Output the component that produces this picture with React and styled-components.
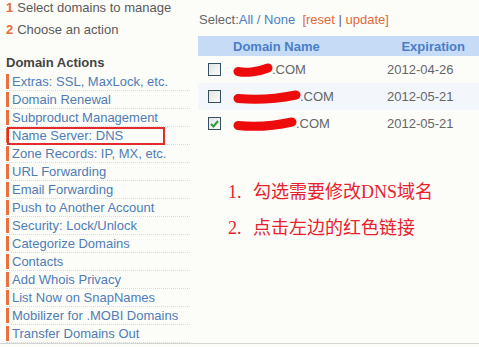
import React from "react";
import styled, { createGlobalStyle } from "styled-components";

const Global = createGlobalStyle`
  html, body { margin: 0; padding: 0; background: #fcfcf9; }
  body { font-family: "Liberation Sans", Arial, sans-serif; font-size: 13px; color: #555; }
`;

const Page = styled.div`
  display: flex;
  width: 479px;
  box-sizing: border-box;
  border-bottom: 1px solid #d4d4d4;
  height: 344px;
  overflow: hidden;
`;

const Side = styled.div`
  width: 195px;
  flex: none;
  display: flex;
  flex-direction: column;
`;

const Step = styled.div`
  line-height: 15px;
  padding-left: 6px;
  margin-top: ${(p) => p.$gap || 0}px;
  color: #5a5a5a;
  white-space: nowrap;
`;

const StepNum = styled.span`
  color: #e46a36;
  font-weight: bold;
  margin-right: 4px;
`;

const SideTitle = styled.div`
  margin-top: 18px;
  margin-bottom: 2px;
  padding-left: 6px;
  line-height: 16px;
  font-weight: bold;
  color: #444;
`;

const ActionList = styled.ul`
  list-style: none;
  margin: 0;
  padding: 0 5px 0 6px;
`;

const Action = styled.li`
  position: relative;
  display: flex;
  align-items: center;
  height: 17px;
  border-bottom: 1px dotted #d3dbe6;
  color: #4f7cb6;
  white-space: nowrap;
  &::before {
    content: "";
    width: 3px;
    height: 15px;
    background: #ea7040;
    margin-right: 3px;
    flex: none;
  }
`;

const Highlight = styled.span`
  position: absolute;
  left: 1px;
  top: 0px;
  width: 154px;
  height: 14px;
  border: 2px solid #e42a2a;
`;

const Main = styled.div`
  flex: 1;
  display: flex;
  flex-direction: column;
`;

const SelectBar = styled.div`
  margin-top: 12px;
  padding-left: 4px;
  line-height: 16px;
  color: #666;
  white-space: nowrap;
`;

const Blue = styled.span`
  color: #4a7ec4;
`;

const Orange = styled.span`
  color: #e06a3a;
`;

const Table = styled.div`
  margin-top: 8px;
  margin-left: 3px;
`;

const Row = styled.div`
  display: grid;
  grid-template-columns: 35px 1fr 92px;
  align-items: center;
  height: ${(p) => (p.$head ? 20 : 27)}px;
  background: ${(p) => (p.$head ? "#c6dcf6" : p.$alt ? "#f3f7fc" : "transparent")};
  font-weight: ${(p) => (p.$head ? "bold" : "normal")};
  color: ${(p) => (p.$head ? "#4a7ec6" : "#666")};
`;

const RightCell = styled.div`
  text-align: ${(p) => (p.$right ? "right" : "left")};
  padding-right: ${(p) => (p.$right ? 14 : 0)}px;
  white-space: nowrap;
`;

const Box = styled.span`
  display: flex;
  align-items: center;
  justify-content: center;
  width: 11px;
  height: 11px;
  margin-left: 10px;
  border: 1px solid #33505e;
  background: linear-gradient(135deg, #e4e4e4, #fafafa);
`;

const NameCell = styled.div`
  display: flex;
  align-items: center;
`;

const Scribble = styled.svg`
  flex: none;
  margin-right: -1px;
`;

const Notes = styled.div`
  margin-top: 37px;
  padding-left: 33px;
  color: #e8222c;
  font-family: "Liberation Serif", "Noto Sans CJK SC", serif;
  font-size: 18px;
  line-height: 36px;
`;

const NoteNum = styled.span`
  display: inline-block;
  width: 25px;
`;

const actions = [
  "Extras: SSL, MaxLock, etc.",
  "Domain Renewal",
  "Subproduct Management",
  "Name Server: DNS",
  "Zone Records: IP, MX, etc.",
  "URL Forwarding",
  "Email Forwarding",
  "Push to Another Account",
  "Security: Lock/Unlock",
  "Categorize Domains",
  "Contacts",
  "Add Whois Privacy",
  "List Now on SnapNames",
  "Mobilizer for .MOBI Domains",
  "Transfer Domains Out",
];

const domains = [
  { w: 40, date: "2012-04-26" },
  { w: 68, date: "2012-05-21", alt: true },
  { w: 64, date: "2012-05-21", checked: true },
];

function Blot({ w }) {
  return (
    <Scribble width={w} height="14" viewBox={`0 0 ${w} 14`}>
      <path
        d={`M5 8.5 C ${w * 0.3} 10, ${w * 0.6} 9.5, ${w - 5} 5`}
        stroke="#ee0b0b"
        strokeWidth="9"
        strokeLinecap="round"
        fill="none"
      />
    </Scribble>
  );
}

export default function App() {
  return (
    <>
      <Global />
      <Page>
        <Side>
          <Step>
            <StepNum>1</StepNum>Select domains to manage
          </Step>
          <Step $gap={7}>
            <StepNum>2</StepNum>Choose an action
          </Step>
          <SideTitle>Domain Actions</SideTitle>
          <ActionList>
            {actions.map((a) => (
              <Action key={a}>
                {a}
                {a === "Name Server: DNS" && <Highlight />}
              </Action>
            ))}
          </ActionList>
        </Side>
        <Main>
          <SelectBar>
            Select:<Blue>All / None</Blue>
            {"  "}&nbsp;<Orange>[reset</Orange> | <Orange>update]</Orange>
          </SelectBar>
          <Table>
            <Row $head>
              <span />
              <RightCell>Domain Name</RightCell>
              <RightCell $right>Expiration</RightCell>
            </Row>
            {domains.map((d, i) => (
              <Row key={i} $alt={d.alt}>
                <Box>
                  {d.checked && (
                    <svg width="9" height="8" viewBox="0 0 9 8">
                      <path d="M1 4 L3.5 6.5 L8 1" stroke="#2e9a3a" strokeWidth="2" fill="none" />
                    </svg>
                  )}
                </Box>
                <NameCell>
                  <Blot w={d.w} />
                  .COM
                </NameCell>
                <RightCell>{d.date}</RightCell>
              </Row>
            ))}
          </Table>
          <Notes>
            <div>
              <NoteNum>1.</NoteNum>勾选需要修改DNS域名
            </div>
            <div>
              <NoteNum>2.</NoteNum>点击左边的红色链接
            </div>
          </Notes>
        </Main>
      </Page>
    </>
  );
}
